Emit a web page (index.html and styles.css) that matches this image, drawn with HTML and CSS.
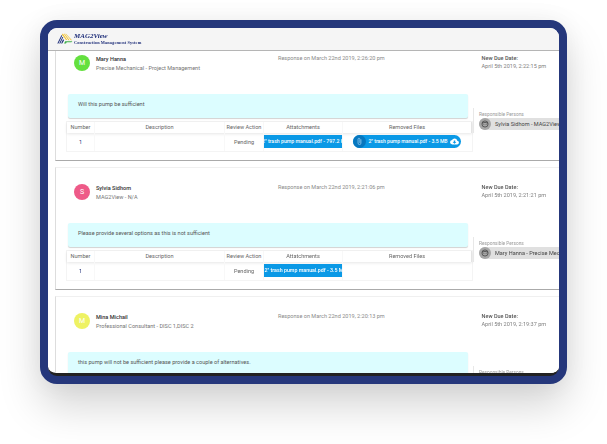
FILE: index.html
```html
<!DOCTYPE html>
<html lang="en">
<head>
<meta charset="utf-8">
<title>MAG2View</title>
<link rel="stylesheet" href="styles.css">
</head>
<body>
<div class="frame">
  <div class="screen">
    <header class="topbar">
      <svg class="logo-mark" viewBox="0 0 16 12" width="16" height="12" aria-hidden="true">
        <path d="M0.3 10.5 L4.4 2.2 L5.4 2.2 L1.4 10.5Z M2.2 10.5 L5.4 4 L6.3 4 L3.3 10.5Z M4.1 10.5 L6.2 6 L7 7.4 L5.2 10.5Z" fill="#1f2f7a"/>
        <path d="M4.9 1.6 L5.8 0.6 L10.2 7 L9 7Z M6.8 0.8 L7.7 0.8 L12.6 7.2 L11.4 7.2Z M8.4 0.8 L9 0.8 L15 7.2 L14 7.2Z" fill="#f2c230"/>
        <path d="M7 10.5 L8.2 8.2 L15.4 8.2 L14.4 9.3 L9.7 9.3 L9 10.5Z" fill="#3fae49"/>
      </svg>
      <div class="brand">
        <div class="brand-name">MAG2View</div>
        <div class="brand-sub">Construction Management System</div>
      </div>
    </header>
    <main class="list">
      <article class="card">
        <div class="main">
          <div class="head">
            <div class="avatar green">M</div>
            <div class="who">
              <div class="name">Mary Hanna</div>
              <div class="org">Precise Mechanical - Project Management</div>
            </div>
            <div class="response">Response on March 22nd 2019, 2:26:20 pm</div>
          </div>
          <div class="note">Will this pump be sufficient</div>
          <div class="table">
            <div class="row thead">
              <div class="c c1">Number</div><div class="c c2">Description</div><div class="c c3">Review Action</div><div class="c c4">Attatchments</div><div class="c c5">Removed Files</div>
            </div>
            <div class="row tbody">
              <div class="c c1 num">1</div><div class="c c2"></div><div class="c c3">Pending</div>
              <div class="c c4"><span class="file wide">2" trash pump manual.pdf - 797.2 KB</span></div>
              <div class="c c5">
                <span class="pill">
                  <span class="clip"><svg viewBox="0 0 10 10" width="9" height="9" aria-hidden="true"><path d="M6.6 2.6v4.2a1.6 1.6 0 0 1-3.2 0V2.4a1 1 0 0 1 2 0v4.2" fill="none" stroke="#9fd4f5" stroke-width=".8"/></svg></span>
                  <span class="pill-text">2" trash pump manual.pdf - 3.5 MB</span>
                  <svg class="cloud" viewBox="0 0 24 24" width="9" height="9" aria-hidden="true"><path d="M19.35 10.04A7.49 7.49 0 0 0 12 4a7.5 7.5 0 0 0-6.65 4.04A6 6 0 0 0 6 20h13a5 5 0 0 0 .35-9.96zM17 13l-5 5-5-5h3V9h4v4h3z" fill="#fff"/></svg>
                </span>
              </div>
            </div>
          </div>
        </div>
        <aside class="side">
          <div class="due-label">New Due Date:</div>
          <div class="due-date">April 5th 2019, 2:22:15 pm</div>
          <div class="rp-wrap">
            <div class="rp-label">Responsible Persons</div>
            <div class="chip">
              <span class="face"><svg viewBox="0 0 12 12" width="8" height="8" aria-hidden="true"><circle cx="6" cy="6" r="4.6" fill="none" stroke="#333" stroke-width="1"/><path d="M1.8 4.6Q6 2.4 10.2 4.6" fill="none" stroke="#333" stroke-width="1"/><circle cx="4.4" cy="6.6" r=".7" fill="#333"/><circle cx="7.6" cy="6.6" r=".7" fill="#333"/></svg></span>
              <span class="chip-text">Sylvia Sidhom - MAG2View - N/A</span>
            </div>
          </div>
        </aside>
      </article>

      <article class="card">
        <div class="main">
          <div class="head">
            <div class="avatar pink">S</div>
            <div class="who">
              <div class="name">Sylvia Sidhom</div>
              <div class="org">MAG2View - N/A</div>
            </div>
            <div class="response">Response on March 22nd 2019, 2:21:06 pm</div>
          </div>
          <div class="note">Please provide several options as this is not sufficient</div>
          <div class="table">
            <div class="row thead">
              <div class="c c1">Number</div><div class="c c2">Description</div><div class="c c3">Review Action</div><div class="c c4">Attatchments</div><div class="c c5">Removed Files</div>
            </div>
            <div class="row tbody">
              <div class="c c1 num">1</div><div class="c c2"></div><div class="c c3">Pending</div>
              <div class="c c4"><span class="file">2" trash pump manual.pdf - 3.5 MB</span></div>
              <div class="c c5"></div>
            </div>
          </div>
        </div>
        <aside class="side">
          <div class="due-label">New Due Date:</div>
          <div class="due-date">April 5th 2019, 2:21:21 pm</div>
          <div class="rp-wrap">
            <div class="rp-label">Responsible Persons</div>
            <div class="chip">
              <span class="face"><svg viewBox="0 0 12 12" width="8" height="8" aria-hidden="true"><circle cx="6" cy="6" r="4.6" fill="none" stroke="#333" stroke-width="1"/><path d="M1.8 4.6Q6 2.4 10.2 4.6" fill="none" stroke="#333" stroke-width="1"/><circle cx="4.4" cy="6.6" r=".7" fill="#333"/><circle cx="7.6" cy="6.6" r=".7" fill="#333"/></svg></span>
              <span class="chip-text">Mary Hanna - Precise Mechanical - Project Management</span>
            </div>
          </div>
        </aside>
      </article>

      <article class="card">
        <div class="main">
          <div class="head">
            <div class="avatar yellow">M</div>
            <div class="who">
              <div class="name">Mina Michail</div>
              <div class="org">Professional Consultant - DISC 1,DISC 2</div>
            </div>
            <div class="response">Response on March 22nd 2019, 2:20:13 pm</div>
          </div>
          <div class="note">this pump will not be sufficient please provide a couple of alternatives.</div>
        </div>
        <aside class="side">
          <div class="due-label">New Due Date:</div>
          <div class="due-date">April 5th 2019, 2:19:37 pm</div>
          <div class="rp-wrap">
            <div class="rp-label">Responsible Persons</div>
          </div>
        </aside>
      </article>
    </main>
  </div>
</div>
</body>
</html>
```

FILE: styles.css
```css
* { box-sizing: border-box; }
html, body { margin: 0; height: 100%; background: #fff; overflow: hidden; }
body { padding: 20px 40px 0; font-family: Roboto, "Liberation Sans", sans-serif; font-size: 5.55px; color: #555; }

.frame {
  width: 527px;
  height: 364px;
  border: 8px solid #25377b;
  border-radius: 17px;
  background: #25377b;
  box-shadow: 0 22px 42px rgba(0,0,0,.17), 0 0 24px rgba(0,0,0,.05);
}
.screen {
  height: 348px;
  border-radius: 9px;
  border-bottom: 3px solid #222;
  background: #fff;
  overflow: hidden;
  display: flex;
  flex-direction: column;
}

.topbar {
  flex: none;
  height: 23px;
  background: #f5f5f5;
  border-bottom: 1.5px solid #b5b5b5;
  display: flex;
  align-items: center;
  gap: 1px;
  padding: 0 0 1px 9px;
  position: relative;
  z-index: 1;
  filter: blur(.3px);
}
.logo-mark { flex: none; }
.brand { font-family: "Liberation Serif", serif; color: #1f2f7a; font-weight: 700; }
.brand-name { font-size: 7px; line-height: 7px; font-style: italic; }
.brand-sub { font-size: 4.3px; line-height: 5px; letter-spacing: .03em; }

.list { flex: none; margin-top: -13px; padding-left: 7px; display: flex; flex-direction: column; gap: 6px; filter: blur(.35px); }
.card {
  flex: none;
  height: 123px;
  display: grid;
  grid-template-columns: 417px 1fr;
  background: #fff;
  border-left: 1px solid #ddd;
  border-top: 1px solid #f0f0f0;
  border-bottom: 1px solid #aaa;
}
.main { padding: 15px 0 0 9px; min-width: 0; }
.head { height: 40px; display: flex; align-items: flex-start; }
.avatar {
  flex: none;
  width: 16px;
  height: 16px;
  margin: 1px 0 0 9px;
  border-radius: 50%;
  color: #fff;
  font-size: 7px;
  line-height: 16px;
  text-align: center;
}
.green { background: #64e03f; }
.pink { background: #ee5a88; }
.yellow { background: #eef263; }
.who { width: 181px; margin-left: 6px; padding-top: .5px; }
.name { font-weight: 500; color: #333; line-height: 8px; }
.org { margin-top: 1.5px; line-height: 8px; color: #757575; }
.response { color: #8a8a8a; line-height: 8px; white-space: nowrap; margin-left: 1px; }

.note {
  width: 400px;
  height: 24px;
  margin-left: 3px;
  padding: 0 10px;
  background: #dcfdff;
  border-radius: 2px;
  box-shadow: 0 1px 1px rgba(0,0,0,.18);
  line-height: 20px;
  color: #555;
}

.table { width: 407px; margin: 3px 0 0 1px; border: 1px solid #f4f4f4; }
.row { display: flex; }
.thead { height: 11px; box-shadow: 0 1px 3px rgba(0,0,0,.1); border-right: 1px solid #e4e4e4; }
.tbody { height: 18px; align-items: stretch; }
.c { text-align: center; line-height: 11px; color: #666; border-right: 1px solid #f8f8f8; white-space: nowrap; }
.tbody .c { line-height: 14px; padding-top: 2px; }
.c1 { width: 28px; }
.c2 { width: 130px; }
.c3 { width: 39px; }
.c4 { width: 79px; overflow: hidden; }
.c5 { flex: 1; border-right: 0; }
.num { color: #1f2f7a; }

.file {
  display: block;
  width: 78px;
  height: 13px;
  padding-left: .5px;
  background: #0a99e6;
  color: #fff;
  font-size: 5.3px;
  font-weight: 500;
  line-height: 13px;
  text-align: left;
  overflow: hidden;
}
.wide { font-size: 5.2px; text-indent: -2.5px; }
.pill {
  display: inline-flex;
  align-items: center;
  height: 13px;
  width: 108px;
  margin-left: -1px;
  border-radius: 7px;
  background: #0a99e6;
  color: #fff;
  font-size: 5.1px;
  font-weight: 500;
}
.clip {
  flex: none;
  width: 13px;
  height: 13px;
  border-radius: 50%;
  background: #0777bf;
  display: flex;
  align-items: center;
  justify-content: center;
}
.pill-text { flex: 1; line-height: 13px; text-align: center; }
.cloud { flex: none; margin-right: 2px; }

.side { padding: 15px 0 0 8.5px; min-width: 0; overflow: hidden; }
.due-label { font-weight: 500; color: #555; line-height: 8px; }
.due-date { line-height: 8px; color: #808080; white-space: nowrap; }
.rp-wrap { margin: 38px 0 0 -8.5px; padding: 3.5px 0 3px 5px; border-left: 1px solid #e8e8e8; }
.rp-label { font-size: 4.8px; color: #999; line-height: 5px; margin-bottom: 1px; white-space: nowrap; }
.chip {
  display: flex;
  align-items: center;
  width: 110px;
  height: 12px;
  border-radius: 6px;
  background: #e0e0e0;
  color: #444;
  white-space: nowrap;
}
.face {
  flex: none;
  width: 12px;
  height: 12px;
  margin-right: 4px;
  border-radius: 50%;
  background: #a6a6a6;
  display: flex;
  align-items: center;
  justify-content: center;
}
```
